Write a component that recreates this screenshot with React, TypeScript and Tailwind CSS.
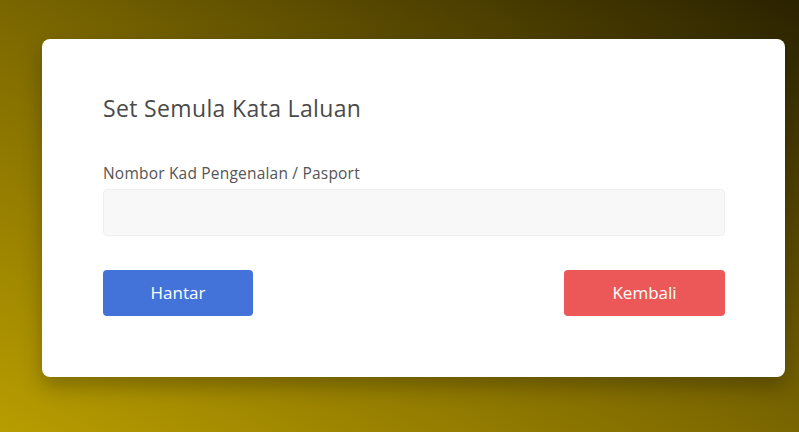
import React, { useState } from 'react';

const App: React.FC = () => {
  const [icNumber, setIcNumber] = useState<string>('');

  return (
    <div
      className="min-h-[432px] w-full bg-[linear-gradient(to_top_right,#b89d00_0%,#7a6600_50%,#2a2200_100%)] pt-[39px] pb-[55px] pl-[42px] pr-[14px]"
      style={{ fontFamily: '"Open Sans", "Liberation Sans", sans-serif' }}
    >
      <div className="rounded-lg bg-white pl-[61px] pr-[60px] pt-[54px] pb-[61px] shadow-[0_10px_20px_rgba(0,0,0,0.25)]">
        <h2 className="text-[23px] leading-[30px] tracking-[0.35px] text-[#4a4a4a]">Set Semula Kata Laluan</h2>

        <form className="mt-[40px]" onSubmit={(e) => e.preventDefault()}>
          <label className="block text-[15.5px] leading-[20px] tracking-[0.2px] text-[#555]">
            Nombor Kad Pengenalan / Pasport
          </label>
          <input
            value={icNumber}
            onChange={(e) => setIcNumber(e.target.value)}
            className="mt-[6px] block h-[47px] w-full rounded border border-[#efefef] bg-[#f8f8f8] px-3 text-sm outline-none"
          />

          <div className="mt-[34px] flex items-center justify-between">
            <button
              type="submit"
              className="h-[46px] w-[150px] rounded bg-[#4373d9] text-[17px] text-white"
            >
              Hantar
            </button>
            <button
              type="button"
              className="h-[46px] w-[161px] rounded bg-[#ec5858] text-[17px] text-white"
            >
              Kembali
            </button>
          </div>
        </form>
      </div>
    </div>
  );
};

export default App;
